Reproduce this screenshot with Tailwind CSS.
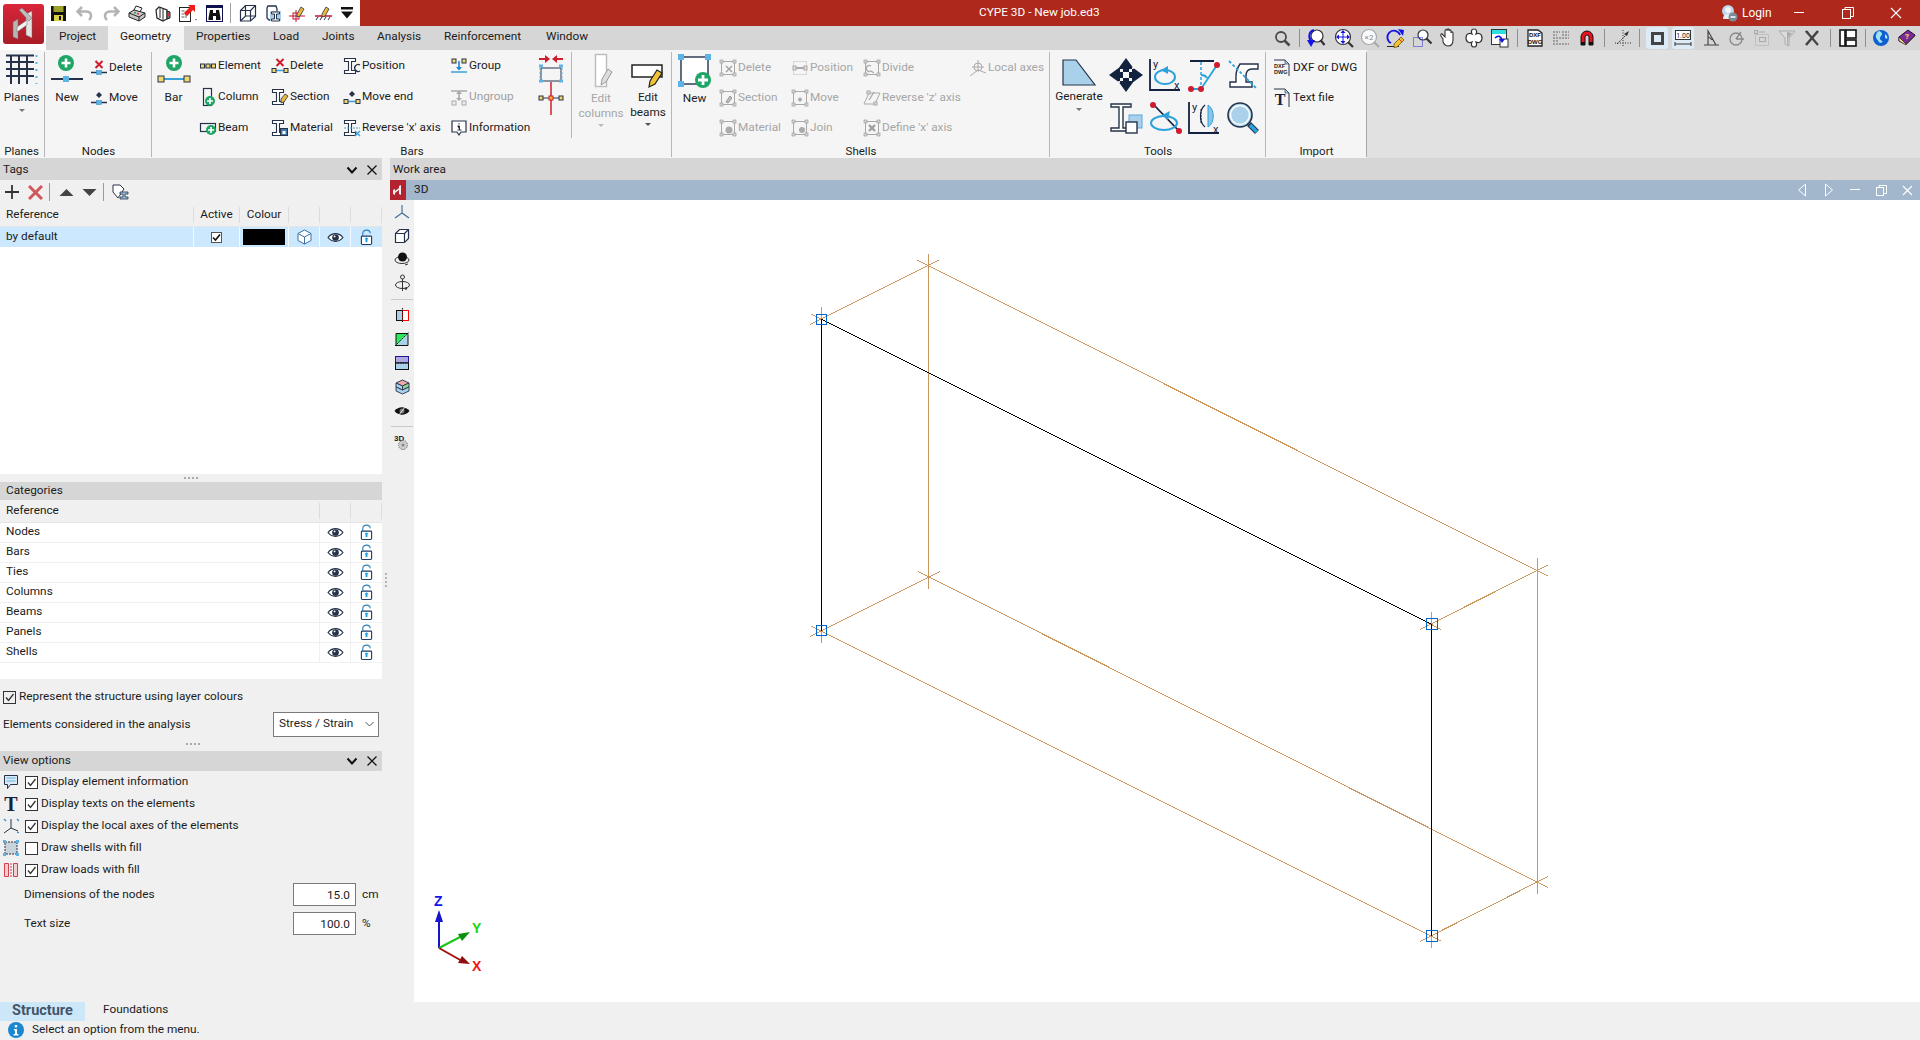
<!DOCTYPE html>
<html lang="en">
<head>
  <meta charset="UTF-8" />
  <title>CYPE 3D - New job.ed3</title>
  <script src="https://cdn.jsdelivr.net/npm/@tailwindcss/browser@4"></script>
</head>
<body class="h-[1040px] w-[1920px] overflow-hidden bg-[#f0f0f0] font-['Roboto',sans-serif] text-[11.8px] leading-none text-[#1c1c1c]">

<!-- shared icons -->
<svg class="absolute h-0 w-0">
  <symbol id="eye" viewBox="0 0 18 14"><path d="M1 7c4-5.500 12-5.500 16 0-4 5.500-12 5.500-16 0z" fill="#fff" stroke="#26324a" stroke-width="1.300"/><circle cx="9" cy="7" r="3.600" fill="#26324a"/><circle cx="8" cy="5.800" r="1" fill="#fff"/></symbol>
  <symbol id="lock" viewBox="0 0 14 18"><path d="M3 7V4.500a4 3.500 0 0 1 8 0" fill="none" stroke="#2d7fb8" stroke-width="1.200"/><rect x="1.500" y="7.500" width="11" height="9" rx="1" fill="#fff" stroke="#1f3d66" stroke-width="1.200"/><rect x="6" y="10" width="2" height="4" fill="#1d9be0"/><path d="M4.800 11L7 8.800 9.200 11z" fill="#1d9be0"/></symbol>
  <symbol id="chev" viewBox="0 0 12 10"><path d="M1.500 2.500L6 7.500l4.500-5" fill="none" stroke="#111" stroke-width="2"/></symbol>
  <symbol id="close" viewBox="0 0 12 12"><path d="M1.500 1.500l9 9M10.500 1.500l-9 9" fill="none" stroke="#111" stroke-width="1.300"/></symbol>
  <symbol id="check" viewBox="0 0 13 13"><path d="M3 6.500l2.500 3L10.500 3" fill="none" stroke="#333" stroke-width="1.300"/></symbol>
  <symbol id="ibeam" viewBox="0 0 18 18"><path d="M1.500 1.500h11v3H8.500v9h4v3h-11v-3h4v-9h-4z" fill="#fff" stroke="#26324a" stroke-width="1.100"/></symbol>
  <symbol id="barline" viewBox="0 0 18 18"><path d="M1 13.500h16" stroke="#3aa0d8" stroke-width="1.500"/><rect x="1" y="11.500" width="4" height="4" fill="#f3d76b" stroke="#26324a"/><rect x="13" y="11.500" width="4" height="4" fill="#f3d76b" stroke="#26324a"/></symbol>
  <symbol id="nodeline" viewBox="0 0 18 18"><path d="M1 13.500h16" stroke="#26324a" stroke-width="1.500"/><rect x="6.500" y="11.500" width="5" height="4" fill="#5cb4e6" stroke="#3a8fc4" stroke-width=".6"/></symbol>
  <symbol id="shell" viewBox="0 0 18 18"><rect x="2.500" y="2.500" width="13" height="13" fill="none" stroke="#a8a8a8"/><g fill="#d5d5d5" stroke="#a0a0a0" stroke-width=".7"><rect x="1" y="1" width="3" height="3"/><rect x="14" y="1" width="3" height="3"/><rect x="1" y="14" width="3" height="3"/><rect x="14" y="14" width="3" height="3"/></g></symbol>
</svg>

<!-- title bar -->
<header class="flex h-[26px] bg-[#ae281c]">
  <div class="flex w-[360px] items-center bg-white pl-[46px]">
    <span class="flex w-[25px] justify-center"><svg width="17" height="17" viewBox="0 0 17 17"><path d="M1 1h15v15H1z" fill="#111"/><rect x="3.500" y="1" width="10" height="6" fill="#9aa229"/><rect x="4" y="10" width="9" height="6" fill="#d9d24a"/><rect x="9" y="11" width="2" height="4" fill="#111"/></svg></span>
    <span class="flex w-[27px] justify-center"><svg width="17" height="16" viewBox="0 0 17 16"><path d="M6 2L1.500 6.500 6 11M2 6.500h8c3.500 0 5 2 5 4.500s-1 3-2 4" fill="none" stroke="#b4b4b4" stroke-width="2.600"/></svg></span>
    <span class="flex w-[26px] justify-center"><svg width="17" height="16" viewBox="0 0 17 16"><path d="M11 2l4.500 4.500L11 11M15 6.500H7C3.500 6.500 2 8.500 2 11s1 3 2 4" fill="none" stroke="#b4b4b4" stroke-width="2.600"/></svg></span>
    <span class="flex w-[26px] justify-center"><svg width="18" height="18" viewBox="0 0 18 18"><path d="M8 2l6 2-2 4H5z" fill="#fff" stroke="#222"/><path d="M1 9l5-3 11 3v4l-6 4-10-4z" fill="#c9c9c9" stroke="#222"/><path d="M1 9l10 4 6-4M11 13v4" fill="none" stroke="#222"/><rect x="6" y="8" width="2" height="1.500" fill="#2a9d4a"/><rect x="9" y="9" width="2" height="1.500" fill="#d33"/></svg></span>
    <span class="flex w-[25px] justify-center"><svg width="18" height="17" viewBox="0 0 18 17"><path d="M2 5l3-3 8 3v9l-4 2-6-3z" fill="#fff" stroke="#222" stroke-width="1.200"/><path d="M6 3v10M9 4v11" stroke="#222"/><path d="M13 6l3 1v6l-3 1z" fill="#777" stroke="#222"/><rect x="13.500" y="8" width="2" height="3" fill="#c33"/></svg></span>
    <span class="flex w-[26px] justify-center"><svg width="20" height="18" viewBox="0 0 20 18"><rect x="1.500" y="3.500" width="11" height="14" fill="#fff" stroke="#222"/><path d="M3.500 7h3M3.500 10h3M3.500 13h3M8 7v7" stroke="#999" stroke-width="1.500"/><path d="M6 9l6-6-2-2h7v7l-2-2-6 6z" fill="#ef1c1c"/><path d="M17 15l2 0-1 1.500z" fill="#555"/></svg></span>
    <span class="flex w-[27px] justify-center"><svg width="17" height="17" viewBox="0 0 17 17"><rect width="17" height="17" fill="#10104f"/><rect x="1" y="3" width="15" height="13" fill="#fff"/><path d="M4 5h3v3h3V5h3l1.500 8v2H10v-4H7v4H2.500v-2z" fill="#111"/></svg></span>
    <span class="ml-[2px] h-[20px] w-px bg-[#a0a0a0]"></span>
    <span class="ml-[4px] flex w-[25px] justify-center"><svg width="18" height="18" viewBox="0 0 18 18" fill="none" stroke="#26324a" stroke-width="1.200"><path d="M1.500 6.500l5-5h10v11l-5 4.500h-10z"/><path d="M1.500 6.500h10v10.500M11.500 6.500l5-5M1.500 17l5-5h10M6.500 1.500V12"/></svg></span>
    <span class="flex w-[25px] justify-center"><svg width="18" height="18" viewBox="0 0 18 18"><path d="M4 2h8l1 3v11H5l-2-2V4z" fill="#fff" stroke="#26324a" stroke-width="1.300"/><rect x="6" y="7" width="11" height="10" fill="#a9d0ea"/><path d="M7.500 8h8v2h-3v5h3v2h-8v-2h3v-5h-3z" fill="#fff" stroke="#26324a"/></svg></span>
    <span class="flex w-[26px] justify-center"><svg width="20" height="18" viewBox="0 0 20 18"><path d="M1 12h16M8 6v12" stroke="#c8102e" stroke-width="1"/><rect x="5" y="9" width="6" height="6" fill="none" stroke="#c8102e"/><path d="M9 10l4-7 3 2-4 7-3 1z" fill="#e9b93a" stroke="#26324a" stroke-width=".8"/></svg></span>
    <span class="flex w-[25px] justify-center"><svg width="20" height="18" viewBox="0 0 20 18"><path d="M1 12h17" stroke="#c8102e" stroke-width="1.500"/><path d="M2 16l2-3M6 16l2-3M10 16l2-3M14 16l2-3" stroke="#26324a"/><path d="M8 10l4-7 3 2-4 7-3 1z" fill="#e9b93a" stroke="#26324a" stroke-width=".8"/></svg></span>
    <span class="flex w-[22px] justify-center"><svg width="14" height="12" viewBox="0 0 14 12"><rect x="1" y="0" width="12" height="2.500" fill="#111"/><path d="M1 4.500h12L7 11.500z" fill="#111"/></svg></span>
  </div>
  <div class="ml-[619px] flex items-center text-white">CYPE 3D - New job.ed3</div>
  <div class="ml-auto flex items-center text-white">
    <svg width="18" height="18" viewBox="0 0 18 18"><circle cx="8" cy="7" r="6" fill="#b9d6ee"/><path d="M3 15c0-4 3-5 5-5s5 1 5 5z" fill="#e8eef3"/><circle cx="8" cy="6" r="3" fill="#f4f4f4"/><circle cx="13" cy="13" r="4.500" fill="#7c8a96"/><path d="M10.500 13h5" stroke="#fff" stroke-width="1.500"/></svg>
    <span class="ml-[4px] w-[34px] text-[12px]">Login</span>
    <span class="flex w-[48px] justify-center"><svg width="12" height="2"><rect width="10" height="1" fill="#fff"/></svg></span>
    <span class="flex w-[48px] justify-center"><svg width="12" height="12" viewBox="0 0 12 12" fill="none" stroke="#fff"><rect x=".5" y="2.500" width="8" height="9"/><path d="M3 2.500v-2h8.500v9H8.500"/></svg></span>
    <span class="flex w-[48px] justify-center"><svg width="12" height="12" viewBox="0 0 12 12"><path d="M1 1l10 10M11 1L1 11" stroke="#fff" stroke-width="1.200"/></svg></span>
  </div>
</header>

<!-- tabs and right toolbar -->
<nav class="flex h-[24px] bg-[#d6d6d6] text-[11.8px]">
  <div class="w-[46px] bg-white"></div>
  <div class="flex w-[62px] items-center pb-[2px] pl-[13px]">Project</div>
  <div class="flex w-[76px] items-center bg-[#f5f5f5] pb-[2px] pl-[12px]">Geometry</div>
  <div class="flex w-[77px] items-center pb-[2px] pl-[12px]">Properties</div>
  <div class="flex w-[49px] items-center pb-[2px] pl-[12px]">Load</div>
  <div class="flex w-[55px] items-center pb-[2px] pl-[12px]">Joints</div>
  <div class="flex w-[67px] items-center pb-[2px] pl-[12px]">Analysis</div>
  <div class="flex w-[102px] items-center pb-[2px] pl-[12px]">Reinforcement</div>
  <div class="flex w-[60px] items-center pb-[2px] pl-[12px]">Window</div>
  <div class="ml-[675px] flex w-[26px] items-center justify-center"><svg width="17" height="17" viewBox="0 0 17 17" fill="none" stroke="#4a4a4a"><circle cx="7" cy="7" r="5" stroke-width="1.800"/><path d="M10.500 10.500l5 5" stroke-width="2.600"/></svg></div>
  <span class="my-[3px] ml-[4px] w-px bg-[#8f8f8f]"></span>
  <div class="ml-[3px] flex w-[26px] items-center justify-center"><svg width="20" height="20" viewBox="0 0 20 20"><circle cx="11" cy="8" r="6" fill="#fff" stroke="#333" stroke-width="1.200"/><path d="M14.500 12l4 5" stroke="#333" stroke-width="2.200"/><path d="M8 2C3 3 2 9 5 13" fill="none" stroke="#1414e6" stroke-width="2"/><path d="M1 12h8l-4 7z" fill="#1414e6"/></svg></div>
  <div class="ml-[2px] flex w-[26px] items-center justify-center"><svg width="20" height="20" viewBox="0 0 20 20"><circle cx="9" cy="9" r="7.500" fill="#fff" stroke="#333" stroke-width="1.200"/><path d="M14 14l5 5" stroke="#333" stroke-width="2.200"/><path d="M9 2l2.500 3h-5zM9 16l2.500-3h-5zM2 9l3-2.500v5zM16 9l-3-2.500v5z" fill="#1414e6"/><path d="M9 5v8M5 9h8" stroke="#1414e6"/></svg></div>
  <div class="flex w-[26px] items-center justify-center"><svg width="20" height="20" viewBox="0 0 20 20"><circle cx="9" cy="9" r="7.500" fill="#fafafa" stroke="#a8a8a8" stroke-width="1.200"/><path d="M14 14l5 5" stroke="#a8a8a8" stroke-width="2"/><text x="9" y="12" text-anchor="middle" font-size="8" fill="#8a8a8a" font-family="Roboto">×2</text></svg></div>
  <div class="flex w-[26px] items-center justify-center"><svg width="20" height="20" viewBox="0 0 20 20"><path d="M14 7A6.500 6.500 0 1 0 5 15" fill="none" stroke="#1414e6" stroke-width="1.800"/><path d="M12 1l6 1-1 6z" fill="#1414e6"/><path d="M1 18.500h12" stroke="#222"/><path d="M8 16l7-7 3 3-7 7-3 .500z" fill="#f2c335" stroke="#5a3f00" stroke-width=".7"/><path d="M13 11l3 3" stroke="#d33"/></svg></div>
  <div class="flex w-[26px] items-center justify-center"><svg width="20" height="20" viewBox="0 0 20 20"><circle cx="11" cy="7" r="5" fill="#fff" stroke="#333" stroke-width="1.200"/><path d="M14.500 10.500l5 5" stroke="#333" stroke-width="2.200"/><rect x="1.500" y="9.500" width="9" height="9" fill="none" stroke="#2828d0" stroke-dasharray="1 1"/></svg></div>
  <div class="flex w-[26px] items-center justify-center"><svg width="18" height="20" viewBox="0 0 18 20"><path d="M4 11L2 8c-1-2 1-3 2-1l2 2V3c0-2 2-2 2 0V2c0-1.500 2-1.500 2 0v1c0-1.500 2-1.500 2 0v2c0-1.500 2-1.500 2 0v7c0 4-2 6-5 6s-4-2-5-4z" fill="#fff" stroke="#333" stroke-width="1.100"/></svg></div>
  <div class="flex w-[26px] items-center justify-center"><svg width="20" height="20" viewBox="0 0 20 20" fill="#fff" stroke="#333" stroke-width="1.200"><path d="M10 1c3 0 3 3 2 5 2-1 6-1 6 4s-4 5-6 4c1 2 1 5-2 5s-3-3-2-5c-2 1-6 1-6-4s4-5 6-4c-1-2-1-5 2-5z"/></svg></div>
  <div class="flex w-[26px] items-center justify-center"><svg width="20" height="20" viewBox="0 0 20 20"><rect x="1.500" y="1.500" width="15" height="15" fill="#fff" stroke="#333"/><rect x="2" y="2" width="14" height="4" fill="#2de0e0"/><rect x="10" y="11" width="8" height="8" fill="#fff" stroke="#333"/><path d="M5 10c3-3 6-2 7 2" fill="none" stroke="#1414e6" stroke-width="1.600"/><path d="M9 11h6l-3 4z" fill="#1414e6"/></svg></div>
  <span class="my-[3px] ml-[4px] w-px bg-[#8f8f8f]"></span>
  <div class="ml-[4px] flex w-[26px] items-center justify-center"><svg width="18" height="18" viewBox="0 0 18 18"><path d="M2 1h10l4 3v13H2z" fill="#fff" stroke="#222" stroke-width="1.300"/><text x="9" y="8" text-anchor="middle" font-size="6" font-weight="700" fill="#111" font-family="Liberation Sans">DXF</text><text x="9" y="14.500" text-anchor="middle" font-size="6" font-weight="700" fill="#111" font-family="Liberation Sans">DWG</text></svg></div>
  <div class="flex w-[26px] items-center justify-center"><svg width="18" height="18" viewBox="0 0 18 18"><path d="M1 3h7M1 6h4M10 3h7M10 6h7M1 9h16M1 12h6M1 15h16" stroke="#8a8a8a" stroke-width="1.600" stroke-dasharray="2 1"/></svg></div>
  <div class="flex w-[26px] items-center justify-center"><svg width="18" height="18" viewBox="0 0 18 18"><path d="M3 16V8a6 6 0 0 1 12 0v8h-4V8a2 2 0 0 0-4 0v8z" fill="#e5141c" stroke="#111"/><path d="M3 13h4v3H3zM11 13h4v3h-4z" fill="#111"/></svg></div>
  <span class="my-[3px] ml-[4px] w-px bg-[#8f8f8f]"></span>
  <div class="ml-[5px] flex w-[26px] items-center justify-center"><svg width="18" height="18" viewBox="0 0 18 18"><path d="M3 15L14 4" stroke="#333" stroke-dasharray="1.500 1"/><path d="M9 1v17M1 14h16" stroke="#333" stroke-dasharray="1 1.500"/><path d="M10 5l5-3-2 5z" fill="#333"/></svg></div>
  <span class="my-[3px] ml-[3px] w-px bg-[#8f8f8f]"></span>
  <div class="ml-[6px] mt-[1px] flex h-[22px] w-[22px] items-center justify-center rounded-[3px] bg-[#dcebf5]"><span class="h-[13px] w-[13px] border-[3px] border-[#444]"></span></div>
  <div class="ml-[4px] mt-[1px] flex h-[22px] w-[22px] items-center justify-center rounded-[3px] bg-[#dcebf5]"><svg width="18" height="18" viewBox="0 0 18 18"><rect x="1.500" y="1.500" width="15" height="9" fill="#fff" stroke="#333"/><text x="9" y="9" text-anchor="middle" font-size="7" fill="#222" font-family="Roboto">1.00</text><path d="M1 15h16M1 13v4M17 13v4" stroke="#333"/></svg></div>
  <div class="ml-[5px] flex w-[25px] items-center justify-center"><svg width="18" height="18" viewBox="0 0 18 18" fill="none" stroke="#444" stroke-width="1.200"><path d="M1 16h15M5 16V2l8 14M5 8a7 7 0 0 1 4 3"/></svg></div>
  <div class="flex w-[25px] items-center justify-center"><svg width="18" height="18" viewBox="0 0 18 18" fill="none" stroke="#888" stroke-width="1.300"><circle cx="8" cy="10" r="6"/><path d="M8 10l5-7M8 10h8"/></svg></div>
  <div class="flex w-[25px] items-center justify-center"><svg width="18" height="18" viewBox="0 0 18 18" fill="none" stroke="#aaa"><rect x="2.500" y="5.500" width="13" height="11" stroke-dasharray="1 1"/><rect x="1.500" y="1.500" width="3" height="3"/><path d="M6 3h6"/><rect x="6.500" y="8.500" width="6" height="4"/></svg></div>
  <div class="flex w-[25px] items-center justify-center"><svg width="18" height="18" viewBox="0 0 18 18"><path d="M1 2h16l-6 7v8l-4-2V9z" fill="#ddd" stroke="#aaa"/><path d="M9 3l5 1-4 5v7l-1-1z" fill="#aaa"/></svg></div>
  <div class="flex w-[25px] items-center justify-center"><svg width="18" height="18" viewBox="0 0 18 18"><path d="M3 2l12 14" stroke="#444" stroke-width="2.200"/><path d="M15 2L3 16" stroke="#444" stroke-width="2.600"/><path d="M2 2l3 0 1 3-2 0z" fill="#444"/></svg></div>
  <span class="my-[3px] ml-[6px] w-px bg-[#8f8f8f]"></span>
  <div class="ml-[5px] flex w-[24px] items-center justify-center"><svg width="18" height="18" viewBox="0 0 18 18" fill="#fff" stroke="#111" stroke-width="1.600"><rect x="1" y="1" width="5" height="16"/><rect x="7" y="1" width="10" height="8"/><rect x="7" y="11" width="10" height="6"/></svg></div>
  <span class="my-[3px] ml-[5px] w-px bg-[#8f8f8f]"></span>
  <div class="ml-[3px] flex w-[24px] items-center justify-center"><svg width="18" height="18" viewBox="0 0 18 18"><circle cx="9" cy="9" r="8" fill="#0f5fd0"/><path d="M7 2c3 1 4 3 2 5s-1 4 1 5-2 3-3 1-4-4-3-7 2-4 3-4zM13 5c2 1 3 3 2 5l-2-1z" fill="#9fe4f2"/></svg></div>
  <div class="ml-[2px] flex w-[24px] items-center justify-center"><svg width="18" height="18" viewBox="0 0 18 18"><path d="M1 8l9-7 7 5-9 9-7-3z" fill="#7a2a98" stroke="#2a1338"/><path d="M1 8v4l7 4 9-9V6l-9 9z" fill="#f2dc78" stroke="#2a1338" stroke-width=".7"/><text x="9" y="10" text-anchor="middle" font-size="8" font-weight="700" fill="#f7e24b" font-family="Roboto">?</text></svg></div>
</nav>

<!-- logo sits over the title bar and the tabs -->
<div class="absolute left-[3px] top-[4px] h-[40px] w-[41px] rounded-[3px] bg-gradient-to-b from-[#d9263a] to-[#a91d26]">
  <svg width="41" height="40" viewBox="0 0 41 40"><path d="M10 18l5-3v20l-5-2z" fill="#b5b5b5" stroke="#6b6b6b" stroke-width=".5"/><path d="M23 10l6-3v27l-6-3z" fill="#e4e4e4" stroke="#6b6b6b" stroke-width=".5"/><path d="M14 23l10-7v5l-10 7z" fill="#f2f2f2" stroke="#6b6b6b" stroke-width=".5"/><path d="M16 6l3-2 10 10-3 3z" fill="#bdbdbd" stroke="#6b6b6b" stroke-width=".5"/></svg>
</div>

<!-- ribbon -->
<section class="flex h-[108px] bg-[#e1e1e1]">
  <!-- Planes -->
  <div class="relative flex w-[45px] flex-col bg-[#f5f5f5]">
    <div class="flex h-[95px] flex-col items-center pr-[2px]">
      <svg class="mt-[4px]" width="33" height="31" viewBox="0 0 33 31"><path d="M1 8h28M1 15h28M1 22h28M6 1v29M14 1v29M22 1v29" stroke="#26324a" stroke-width="2"/><path d="M1 1.500h28" stroke="#26324a" stroke-width="2"/><path d="M31.500 1v29" stroke="#5cb4e6" stroke-width="2" stroke-dasharray="2 5"/></svg>
      <span class="mt-[7px]">Planes</span>
      <span class="mt-[5px] h-0 w-0 border-x-[3px] border-t-[3px] border-x-transparent border-t-[#777]"></span>
    </div>
    <div class="flex h-[13px] items-center justify-center pr-[2px] text-[11.500px]">Planes</div>
    <span class="absolute bottom-[1px] right-0 top-[2px] w-px bg-[#b8b8b8]"></span>
  </div>
  <!-- Nodes -->
  <div class="relative flex w-[107px] flex-col bg-[#f5f5f5]">
    <div class="flex h-[95px]">
      <div class="flex w-[44px] flex-col items-center">
        <svg class="mt-[3px]" width="34" height="32" viewBox="0 0 34 32"><circle cx="16" cy="10" r="8" fill="#1fa566"/><path d="M16 5.500v9M11.500 10h9" stroke="#fff" stroke-width="2.600"/><path d="M1 26h32" stroke="#26324a" stroke-width="2"/><rect x="13" y="23" width="6" height="6" fill="#5cb4e6"/></svg>
        <span class="mt-[7px]">New</span>
      </div>
      <div class="flex flex-col pt-[2px]">
        <div class="flex h-[31px] items-center"><span class="flex w-[20px] justify-center"><svg width="18" height="18"><use href="#nodeline"/><path d="M5.500 2l7 7M12.500 2l-7 7" stroke="#d01c2c" stroke-width="2"/></svg></span>Delete</div>
        <div class="flex h-[30px] items-center"><span class="flex w-[20px] justify-center"><svg width="18" height="18"><use href="#nodeline"/><path d="M9 3l3 3-3 3-3-3z" fill="#26324a"/></svg></span>Move</div>
      </div>
    </div>
    <div class="flex h-[13px] items-center justify-center text-[11.500px]">Nodes</div>
    <span class="absolute bottom-[1px] right-0 top-[2px] w-px bg-[#b8b8b8]"></span>
  </div>
  <!-- Bars -->
  <div class="relative flex w-[520px] flex-col bg-[#f5f5f5]">
    <div class="flex h-[95px]">
      <div class="flex w-[45px] flex-col items-center pr-[2px]">
        <svg class="mt-[3px]" width="34" height="32" viewBox="0 0 34 32"><circle cx="17" cy="10" r="8" fill="#1fa566"/><path d="M17 5.500v9M12.500 10h9" stroke="#fff" stroke-width="2.600"/><path d="M3 26h28" stroke="#3aa0d8" stroke-width="2"/><rect x="1" y="23" width="6" height="6" fill="#f3d76b" stroke="#26324a"/><rect x="27" y="23" width="6" height="6" fill="#f3d76b" stroke="#26324a"/></svg>
        <span class="mt-[7px]">Bar</span>
      </div>
      <div class="flex w-[72px] flex-col">
        <div class="flex h-[31px] items-center"><span class="flex w-[21px] justify-center"><svg width="18" height="10" viewBox="0 0 18 10"><path d="M1 5h16" stroke="#26324a"/><g fill="#f3d76b" stroke="#26324a"><rect x="1.500" y="3" width="4" height="4"/><rect x="7" y="3" width="4" height="4"/><rect x="12.500" y="3" width="4" height="4"/></g></svg></span>Element</div>
        <div class="flex h-[31px] items-center"><span class="flex w-[21px] justify-center"><svg width="18" height="20" viewBox="0 0 18 20"><rect x="4.500" y="1.500" width="8" height="17" fill="none" stroke="#26324a" stroke-width="1.200"/><circle cx="11" cy="14" r="5" fill="#1fa566"/><path d="M11 11v6M8 14h6" stroke="#fff" stroke-width="1.600"/></svg></span>Column</div>
        <div class="flex h-[31px] items-center"><span class="flex w-[21px] justify-center"><svg width="18" height="16" viewBox="0 0 18 16"><rect x="1.500" y="3.500" width="15" height="8" fill="none" stroke="#26324a" stroke-width="1.200"/><circle cx="12" cy="10" r="5" fill="#1fa566"/><path d="M12 7v6M9 10h6" stroke="#fff" stroke-width="1.600"/></svg></span>Beam</div>
      </div>
      <div class="flex w-[72px] flex-col">
        <div class="flex h-[31px] items-center"><span class="flex w-[21px] justify-center"><svg width="18" height="18"><use href="#barline"/><path d="M5.500 2l7 7M12.500 2l-7 7" stroke="#d01c2c" stroke-width="2"/></svg></span>Delete</div>
        <div class="flex h-[31px] items-center"><span class="flex w-[21px] justify-center"><svg width="18" height="18"><use href="#ibeam"/><path d="M10 11l4-5 3 2-4 6-3 1z" fill="#e9b93a" stroke="#26324a" stroke-width=".8"/></svg></span>Section</div>
        <div class="flex h-[31px] items-center"><span class="flex w-[21px] justify-center"><svg width="18" height="18"><use href="#ibeam"/><rect x="9.500" y="9.500" width="7" height="7" fill="#3f78a8" stroke="#26324a"/><rect x="11.500" y="12" width="3" height="3" fill="#fff"/></svg></span>Material</div>
      </div>
      <div class="flex w-[107px] flex-col">
        <div class="flex h-[31px] items-center"><span class="flex w-[21px] justify-center"><svg width="18" height="18"><use href="#ibeam"/><path d="M17 8a3.500 3.500 0 1 0 0 6" fill="none" stroke="#26324a" stroke-width="1.300"/></svg></span>Position</div>
        <div class="flex h-[31px] items-center"><span class="flex w-[21px] justify-center"><svg width="18" height="18"><use href="#barline"/><path d="M9 3l3 3-3 3-3-3z" fill="#26324a"/></svg></span>Move end</div>
        <div class="flex h-[31px] items-center"><span class="flex w-[21px] justify-center"><svg width="18" height="18"><use href="#ibeam"/><path d="M1 9h16" stroke="#3aa0d8" stroke-dasharray="2 1"/><path d="M12 12l5 5M17 12l-5 5" stroke="#3aa0d8" stroke-width="1.300"/></svg></span>Reverse 'x' axis</div>
      </div>
      <div class="flex w-[88px] flex-col">
        <div class="flex h-[31px] items-center"><span class="flex w-[21px] justify-center"><svg width="18" height="18" viewBox="0 0 18 18"><path d="M1 15h16" stroke="#3aa0d8" stroke-width="1.500"/><g fill="#f3d76b" stroke="#26324a"><rect x="2" y="2" width="4" height="4"/><rect x="12" y="2" width="4" height="4"/></g><path d="M9 4v7" stroke="#1b86d0" stroke-width="1.600"/><path d="M6 10h6l-3 3.500z" fill="#1b86d0"/></svg></span>Group</div>
        <div class="flex h-[31px] items-center text-[#a0a0a0]"><span class="flex w-[21px] justify-center"><svg width="18" height="18" viewBox="0 0 18 18"><path d="M1 3h16" stroke="#aaa" stroke-width="1.500"/><path d="M9 3v8" stroke="#aaa" stroke-width="1.600"/><path d="M6 6l3-3.500L12 6zM6 10h6l-3 3z" fill="#aaa"/><g fill="#eee" stroke="#aaa"><rect x="2" y="13" width="4" height="4"/><rect x="12" y="13" width="4" height="4"/></g></svg></span>Ungroup</div>
        <div class="flex h-[31px] items-center"><span class="flex w-[21px] justify-center"><svg width="18" height="18" viewBox="0 0 18 18"><path d="M2 2h14v11h-5l-2 3-2-3H2z" fill="#fff" stroke="#26324a" stroke-width="1.200"/><path d="M9 4v1.500M7.500 7H9.500v4M7.500 11h4" stroke="#26324a"/></svg></span>Information</div>
      </div>
      <div class="flex w-[30px] flex-col items-center">
        <svg class="mt-[4px]" width="26" height="30" viewBox="0 0 26 30"><path d="M1 5h8M25 5h-8" stroke="#d01c2c" stroke-width="2"/><path d="M12 5L7 1v8zM14 5l5-4v8z" fill="#d01c2c"/><rect x="3" y="14" width="20" height="13" fill="none" stroke="#26324a"/><path d="M1 12h4M21 12h4M1 27h4M21 27h4" stroke="#5cb4e6" stroke-width="3"/><path d="M2 14v12M24 14v12" stroke="#5cb4e6" stroke-dasharray="2 2"/></svg>
        <svg class="mt-[-3px]" width="26" height="34" viewBox="0 0 26 34"><path d="M13 1v33" stroke="#d01c2c" stroke-width="1.500"/><path d="M1 17h24" stroke="#26324a"/><rect x="1" y="15" width="4" height="4" fill="#f3d76b" stroke="#26324a"/><rect x="21" y="15" width="4" height="4" fill="#f3d76b" stroke="#26324a"/><rect x="11" y="15" width="4" height="4" fill="#f3b03b" stroke="#d01c2c"/></svg>
      </div>
      <span class="mb-[-12px] ml-[5px] mt-[2px] h-[86px] w-px bg-[#b8b8b8]"></span>
      <div class="flex w-[58px] flex-col items-center text-[#a6a6a6]">
        <svg class="mt-[3px]" width="26" height="37" viewBox="0 0 26 37"><rect x="7.500" y="1.500" width="11" height="32" fill="#fff" stroke="#bcbcbc" stroke-width="1.400"/><path d="M14 26l6-10 4 3-6 10-5 3z" fill="#ddd" stroke="#999"/></svg>
        <span class="mt-[1px] leading-[15px]">Edit</span>
        <span class="leading-[15px]">columns</span>
        <span class="mt-[3px] h-0 w-0 border-x-[3px] border-t-[3px] border-x-transparent border-t-[#bbb]"></span>
      </div>
      <div class="flex w-[36px] flex-col items-center">
        <svg class="mt-[9px] shrink-0" width="34" height="34" viewBox="0 0 34 34"><rect x="1" y="6" width="30" height="12" fill="#fff" stroke="#222" stroke-width="1.500"/><path d="M19 22l7-11 5 3-7 11-6 3z" fill="#f2c335" stroke="#222" stroke-width="1.200"/></svg>
        <span class="mt-[-3px] leading-[15px]">Edit</span>
        <span class="leading-[15px]">beams</span>
        <span class="mt-[3px] h-0 w-0 border-x-[3px] border-t-[3px] border-x-transparent border-t-[#555]"></span>
      </div>
    </div>
    <div class="flex h-[13px] items-center justify-center text-[11.500px]">Bars</div>
    <span class="absolute bottom-[1px] right-0 top-[2px] w-px bg-[#b8b8b8]"></span>
  </div>
  <!-- Shells -->
  <div class="relative flex w-[378px] flex-col bg-[#f5f5f5] text-[#a6a6a6]">
    <div class="flex h-[95px] pt-[2px]">
      <div class="flex w-[45px] flex-col items-center text-[#1c1c1c]">
        <svg class="mt-[2px]" width="34" height="34" viewBox="0 0 34 34"><rect x="3" y="3" width="27" height="27" fill="#fff" stroke="#26324a" stroke-width="1.400"/><g fill="#5cb4e6"><rect x="0" y="0" width="6" height="6"/><rect x="27" y="0" width="6" height="6"/><rect x="0" y="27" width="6" height="6"/></g><circle cx="25" cy="26" r="8" fill="#1fa566"/><path d="M25 21v10M20 26h10" stroke="#fff" stroke-width="2.800"/></svg>
        <span class="mt-[5px]">New</span>
      </div>
      <div class="flex w-[72px] flex-col">
        <div class="flex h-[31px] items-center"><span class="flex w-[21px] justify-center"><svg width="18" height="18"><use href="#shell"/><path d="M7 7l6 6M13 7l-6 6" stroke="#a0a0a0" stroke-width="1.400"/></svg></span>Delete</div>
        <div class="flex h-[30px] items-center"><span class="flex w-[21px] justify-center"><svg width="18" height="18"><use href="#shell"/><path d="M7 13l4-6 2 2-4 5z" fill="#bbb" stroke="#999"/></svg></span>Section</div>
        <div class="flex h-[29px] items-center"><span class="flex w-[21px] justify-center"><svg width="18" height="18"><use href="#shell"/><circle cx="10" cy="11" r="3.500" fill="#aaa"/></svg></span>Material</div>
      </div>
      <div class="flex w-[72px] flex-col">
        <div class="flex h-[31px] items-center"><span class="flex w-[21px] justify-center"><svg width="18" height="18" viewBox="0 0 18 18"><rect x="2.500" y="2.500" width="13" height="13" fill="none" stroke="#bbb" stroke-dasharray="1 1"/><path d="M4 9h10" stroke="#aaa" stroke-width="2"/><rect x="2" y="7" width="3" height="4" fill="#ddd" stroke="#aaa"/><rect x="13" y="7" width="3" height="4" fill="#ddd" stroke="#aaa"/></svg></span>Position</div>
        <div class="flex h-[30px] items-center"><span class="flex w-[21px] justify-center"><svg width="18" height="18"><use href="#shell"/><path d="M9 8l2.500 2.500L9 13l-2.500-2.500z" fill="#aaa"/></svg></span>Move</div>
        <div class="flex h-[29px] items-center"><span class="flex w-[21px] justify-center"><svg width="18" height="18"><use href="#shell"/><circle cx="11" cy="11" r="3" fill="#aaa"/></svg></span>Join</div>
      </div>
      <div class="flex w-[106px] flex-col">
        <div class="flex h-[31px] items-center"><span class="flex w-[21px] justify-center"><svg width="18" height="18"><use href="#shell"/><path d="M8 7a3 3 0 1 0 0 5l3 2" fill="none" stroke="#aaa" stroke-width="1.300"/></svg></span>Divide</div>
        <div class="flex h-[30px] items-center"><span class="flex w-[21px] justify-center"><svg width="18" height="18" viewBox="0 0 18 18" fill="none" stroke="#aaa"><path d="M6 4h11l-5 11H1z"/><path d="M6 11l5-8" stroke-width="1.400"/><rect x="4" y="2" width="3" height="3" fill="#ddd"/><rect x="11" y="13" width="3" height="3" fill="#ddd"/></svg></span>Reverse 'z' axis</div>
        <div class="flex h-[29px] items-center"><span class="flex w-[21px] justify-center"><svg width="18" height="18"><use href="#shell"/><path d="M6 6l6 6M12 6l-6 6" stroke="#999" stroke-width="2"/></svg></span>Define 'x' axis</div>
      </div>
      <div class="flex flex-col">
        <div class="flex h-[31px] items-center"><span class="flex w-[21px] justify-center"><svg width="18" height="18" viewBox="0 0 18 18" fill="none" stroke="#aaa"><circle cx="9" cy="8" r="4"/><path d="M9 1v11M1 17l8-6 8 3M3 8h12"/></svg></span>Local axes</div>
      </div>
    </div>
    <div class="flex h-[13px] items-center justify-center text-[11.500px] text-[#1c1c1c]">Shells</div>
    <span class="absolute bottom-[1px] right-0 top-[2px] w-px bg-[#b8b8b8]"></span>
  </div>
  <!-- Tools -->
  <div class="relative flex w-[216px] flex-col bg-[#f5f5f5]">
    <div class="flex h-[95px]">
      <div class="flex w-[58px] flex-col items-center">
        <svg class="mt-[9px]" width="34" height="27" viewBox="0 0 34 27"><path d="M1 1h13l19 25H1z" fill="#a9d2ea" stroke="#26324a" stroke-width="1.200"/></svg>
        <span class="mt-[5px]">Generate</span>
        <span class="mt-[5px] h-0 w-0 border-x-[3px] border-t-[3px] border-x-transparent border-t-[#777]"></span>
      </div>
      <div class="ml-[-2px] grid grid-cols-[39px_39px_39px_39px] grid-rows-[43px_43px] items-center justify-items-center pt-[3px]">
        <svg width="34" height="34" viewBox="0 0 34 34" fill="#13233f"><path d="M17 0l8 11h-5v3h-6v-3H9zM17 34l8-11h-5v-3h-6v3H9zM0 17l11-8v5h3v6h-3v5zM34 17l-11-8v5h-3v6h3v5z"/></svg>
        <svg width="34" height="34" viewBox="0 0 34 34"><path d="M2 1v31h30" fill="none" stroke="#13233f" stroke-width="1.800"/><text x="5" y="10" font-size="11" fill="#13233f" font-family="Roboto">y</text><text x="26" y="31" font-size="11" fill="#13233f" font-family="Roboto">x</text><ellipse cx="17" cy="19" rx="10" ry="7" fill="none" stroke="#2ba2dc" stroke-width="2"/><path d="M20 8L13 12l7 4z" fill="#2ba2dc"/></svg>
        <svg width="34" height="34" viewBox="0 0 34 34"><path d="M3 3h24" stroke="#13233f" stroke-width="2"/><path d="M14 4v26" stroke="#2ba2dc" stroke-width="1.500" stroke-dasharray="3 2"/><path d="M14 31L30 7M4 31h10M14 17c3 0 5 1 6 3" fill="none" stroke="#2ba2dc" stroke-width="1.800"/><g fill="#d01c2c"><circle cx="4" cy="31" r="3"/><circle cx="14" cy="31" r="3"/><circle cx="30" cy="7" r="3"/></g></svg>
        <svg width="34" height="34" viewBox="0 0 34 34"><path d="M14 6h18v5h-6c-4 0-6 3-6 7v6h6v5H4v-5h6v-6c0-6 4-12 4-12z" fill="#fff" stroke="#26324a" stroke-width="1.400"/><path d="M3 3l28 28" stroke="#2ba2dc" stroke-width="1.800" stroke-dasharray="3 2"/></svg>
        <svg width="34" height="34" viewBox="0 0 34 34"><path d="M2 3h20v3h-8v21h8v3H2v-3h8V6H2z" fill="#fff" stroke="#26324a" stroke-width="1.400"/><rect x="20" y="14" width="13" height="13" fill="#a9d2ea" stroke="#5ba8d8"/><rect x="17" y="21" width="11" height="11" fill="#fff" stroke="#26324a" stroke-width="1.400"/></svg>
        <svg width="34" height="34" viewBox="0 0 34 34"><path d="M5 3l26 27" stroke="#13233f" stroke-width="1.800"/><ellipse cx="16" cy="22" rx="13" ry="7" fill="none" stroke="#2ba2dc" stroke-width="2"/><path d="M22 10l-8 4 6 5z" fill="#2ba2dc"/><circle cx="5" cy="4" r="3" fill="#d01c2c"/><circle cx="31" cy="30" r="3" fill="#d01c2c"/></svg>
        <svg width="34" height="34" viewBox="0 0 34 34"><path d="M2 1v31h30" fill="none" stroke="#13233f" stroke-width="1.800"/><text x="5" y="10" font-size="11" fill="#13233f" font-family="Roboto">y</text><text x="26" y="32" font-size="11" fill="#13233f" font-family="Roboto">x</text><path d="M18 4c-6 5-6 17 0 22" fill="none" stroke="#13233f" stroke-width="1.200"/><path d="M14 8v14" stroke="#13233f" stroke-dasharray="2 1"/><path d="M21 4c7 4 7 18 0 22z" fill="#8cc4e8" stroke="#2ba2dc"/></svg>
        <svg width="34" height="34" viewBox="0 0 34 34"><circle cx="14" cy="14" r="12" fill="#a9d2ea" stroke="#26324a" stroke-width="1.600"/><circle cx="14" cy="14" r="9.500" fill="none" stroke="#fff" stroke-width="1.400"/><path d="M23 23l8 8" stroke="#26324a" stroke-width="5.500"/><path d="M24 24l7 7" stroke="#2ba2dc" stroke-width="3.500"/></svg>
      </div>
    </div>
    <div class="flex h-[13px] items-center justify-center text-[11.500px]">Tools</div>
    <span class="absolute bottom-[1px] right-0 top-[2px] w-px bg-[#b8b8b8]"></span>
  </div>
  <!-- Import -->
  <div class="relative flex w-[101px] flex-col bg-[#f5f5f5]">
    <div class="flex h-[95px] flex-col pl-[7px] pt-[2px]">
      <div class="flex h-[31px] items-center"><svg class="mr-[3px]" width="17" height="18" viewBox="0 0 17 18"><path d="M1 1h11l4 4v12" fill="none" stroke="#26324a"/><path d="M12 1v4h4z" fill="#a9d2ea" stroke="#26324a" stroke-width=".6"/><text x="1" y="9" font-size="5.500" font-weight="700" fill="#222" font-family="Liberation Sans">DXF</text><text x="1" y="15" font-size="5.500" font-weight="700" fill="#222" font-family="Liberation Sans">DWG</text></svg>DXF or DWG</div>
      <div class="flex h-[30px] items-center"><svg class="mr-[3px]" width="17" height="20" viewBox="0 0 17 20"><path d="M1 1h11l4 4v14" fill="none" stroke="#26324a"/><path d="M12 1v4h4z" fill="#a9d2ea" stroke="#26324a" stroke-width=".6"/><text x="7" y="17" text-anchor="middle" font-size="16" font-weight="700" fill="#13233f" font-family="Liberation Serif">T</text></svg>Text file</div>
    </div>
    <div class="flex h-[13px] items-center justify-center text-[11.500px]">Import</div>
    <span class="absolute bottom-[1px] right-0 top-[2px] w-px bg-[#a8a8a8]"></span>
  </div>
</section>

<!-- main area -->
<main class="flex h-[844px]">
  <!-- left panels -->
  <aside class="flex w-[382px] flex-col">
    <!-- Tags -->
    <div class="flex h-[316px] flex-col bg-white">
      <div class="flex h-[22px] shrink-0 items-center bg-[#d6d6d6] pl-[3px] pt-[2px]">Tags
        <svg class="ml-auto" width="12" height="10"><use href="#chev"/></svg>
        <svg class="ml-[8px] mr-[4px]" width="12" height="12"><use href="#close"/></svg>
      </div>
      <div class="flex h-[24px] shrink-0 items-center bg-[#f0f0f0] pl-[5px]">
        <svg width="14" height="14" viewBox="0 0 14 14"><path d="M7 0v14M0 7h14" stroke="#333" stroke-width="1.800"/></svg>
        <svg class="ml-[9px]" width="15" height="15" viewBox="0 0 15 15"><path d="M1 1l13 13M14 1L1 14" stroke="#d0585a" stroke-width="3"/></svg>
        <span class="ml-[6px] h-[18px] w-px bg-[#9a9a9a]"></span>
        <svg class="ml-[9px]" width="15" height="9" viewBox="0 0 15 9"><path d="M7.500 1L14.500 8H.5z" fill="#444"/></svg>
        <svg class="ml-[8px]" width="15" height="9" viewBox="0 0 15 9"><path d="M.5 1h14L7.500 8z" fill="#444"/></svg>
        <span class="ml-[6px] h-[18px] w-px bg-[#9a9a9a]"></span>
        <svg class="ml-[8px]" width="17" height="17" viewBox="0 0 17 17"><path d="M1 1h7l4 4-6 9-5-6z" fill="#fff" stroke="#26324a"/><path d="M8 8h8v2h-3v3h3v2H8v-2h3v-3H8z" fill="#9ec6e2" stroke="#26324a" stroke-width=".8"/></svg>
      </div>
      <div class="grid h-[23px] shrink-0 grid-cols-[194px_46px_49px_31px_31px_31px] border-b border-[#e5e5e5] bg-[#f0f0f0]">
        <span class="my-[3px] flex items-center border-r border-[#dcdcdc] pl-[6px]">Reference</span>
        <span class="my-[3px] flex items-center justify-center border-r border-[#dcdcdc]">Active</span>
        <span class="my-[3px] flex items-center justify-center border-r border-[#dcdcdc]">Colour</span>
        <span class="my-[3px] border-r border-[#dcdcdc]"></span>
        <span class="my-[3px] border-r border-[#dcdcdc]"></span>
        <span class="my-[3px] border-r border-[#dcdcdc]"></span>
      </div>
      <div class="grid h-[20px] shrink-0 grid-cols-[194px_46px_49px_31px_31px_31px] bg-[#cce8ff]">
        <span class="flex items-center border-r border-[#f2f8fd] pl-[6px]">by default</span>
        <span class="flex items-center justify-center border-r border-[#f2f8fd]"><span class="h-[11px] w-[11px] border border-[#555] bg-white"><svg class="m-[-1px]" width="11" height="11"><path d="M2 5.500L4.500 8 9 2.500" fill="none" stroke="#111" stroke-width="1.600"/></svg></span></span>
        <span class="flex items-center justify-center border-r border-[#f2f8fd]"><span class="h-[16px] w-[42px] bg-black"></span></span>
        <span class="flex items-center justify-center border-r border-[#f2f8fd]"><svg width="15" height="16" viewBox="0 0 15 16" fill="#fff" stroke="#3a6ea5"><path d="M7.500 1L14 4.500v7L7.500 15 1 11.500v-7z"/><path d="M1 4.500L7.500 8 14 4.500M7.500 8v7"/></svg></span>
        <span class="flex items-center justify-center border-r border-[#f2f8fd]"><svg width="17" height="13"><use href="#eye"/></svg></span>
        <span class="flex items-center justify-center"><svg width="13" height="17"><use href="#lock"/></svg></span>
      </div>
    </div>
    <div class="flex h-[8px] items-center justify-center gap-[2px]"><i class="h-[2px] w-[2px] bg-[#aaa]"></i><i class="h-[2px] w-[2px] bg-[#aaa]"></i><i class="h-[2px] w-[2px] bg-[#aaa]"></i><i class="h-[2px] w-[2px] bg-[#aaa]"></i></div>
    <!-- Categories -->
    <div class="flex h-[197px] flex-col bg-white">
      <div class="flex h-[18px] shrink-0 items-center bg-[#d6d6d6] pl-[6px]">Categories</div>
      <div class="grid h-[23px] shrink-0 grid-cols-[320px_31px_31px] border-b border-[#e5e5e5] bg-[#f0f0f0]">
        <span class="my-[3px] flex items-center border-r border-[#dcdcdc] pl-[6px]">Reference</span>
        <span class="my-[3px] border-r border-[#dcdcdc]"></span>
        <span class="my-[3px] border-r border-[#dcdcdc]"></span>
      </div>
      <div class="grid h-[20px] shrink-0 grid-cols-[320px_31px_31px] border-b border-[#f0f0f0]">
        <span class="flex items-center border-r border-[#f0f0f0] pb-[1px] pl-[6px]">Nodes</span>
        <span class="flex items-center justify-center border-r border-[#f0f0f0]"><svg width="17" height="13"><use href="#eye"/></svg></span>
        <span class="flex items-center justify-center"><svg width="13" height="17"><use href="#lock"/></svg></span>
      </div>
      <div class="grid h-[20px] shrink-0 grid-cols-[320px_31px_31px] border-b border-[#f0f0f0]">
        <span class="flex items-center border-r border-[#f0f0f0] pb-[1px] pl-[6px]">Bars</span>
        <span class="flex items-center justify-center border-r border-[#f0f0f0]"><svg width="17" height="13"><use href="#eye"/></svg></span>
        <span class="flex items-center justify-center"><svg width="13" height="17"><use href="#lock"/></svg></span>
      </div>
      <div class="grid h-[20px] shrink-0 grid-cols-[320px_31px_31px] border-b border-[#f0f0f0]">
        <span class="flex items-center border-r border-[#f0f0f0] pb-[1px] pl-[6px]">Ties</span>
        <span class="flex items-center justify-center border-r border-[#f0f0f0]"><svg width="17" height="13"><use href="#eye"/></svg></span>
        <span class="flex items-center justify-center"><svg width="13" height="17"><use href="#lock"/></svg></span>
      </div>
      <div class="grid h-[20px] shrink-0 grid-cols-[320px_31px_31px] border-b border-[#f0f0f0]">
        <span class="flex items-center border-r border-[#f0f0f0] pb-[1px] pl-[6px]">Columns</span>
        <span class="flex items-center justify-center border-r border-[#f0f0f0]"><svg width="17" height="13"><use href="#eye"/></svg></span>
        <span class="flex items-center justify-center"><svg width="13" height="17"><use href="#lock"/></svg></span>
      </div>
      <div class="grid h-[20px] shrink-0 grid-cols-[320px_31px_31px] border-b border-[#f0f0f0]">
        <span class="flex items-center border-r border-[#f0f0f0] pb-[1px] pl-[6px]">Beams</span>
        <span class="flex items-center justify-center border-r border-[#f0f0f0]"><svg width="17" height="13"><use href="#eye"/></svg></span>
        <span class="flex items-center justify-center"><svg width="13" height="17"><use href="#lock"/></svg></span>
      </div>
      <div class="grid h-[20px] shrink-0 grid-cols-[320px_31px_31px] border-b border-[#f0f0f0]">
        <span class="flex items-center border-r border-[#f0f0f0] pb-[1px] pl-[6px]">Panels</span>
        <span class="flex items-center justify-center border-r border-[#f0f0f0]"><svg width="17" height="13"><use href="#eye"/></svg></span>
        <span class="flex items-center justify-center"><svg width="13" height="17"><use href="#lock"/></svg></span>
      </div>
      <div class="grid h-[20px] shrink-0 grid-cols-[320px_31px_31px] border-b border-[#f0f0f0]">
        <span class="flex items-center border-r border-[#f0f0f0] pb-[1px] pl-[6px]">Shells</span>
        <span class="flex items-center justify-center border-r border-[#f0f0f0]"><svg width="17" height="13"><use href="#eye"/></svg></span>
        <span class="flex items-center justify-center"><svg width="13" height="17"><use href="#lock"/></svg></span>
      </div>
    </div>
    <!-- layer colours and analysis elements -->
    <div class="flex h-[72px] flex-col pl-[3px]">
      <div class="mt-[11px] flex h-[14px] items-center"><svg class="mr-[3px]" width="13" height="13"><rect x=".5" y=".5" width="12" height="12" fill="none" stroke="#333"/><use href="#check"/></svg>Represent the structure using layer colours</div>
      <div class="mt-[8px] flex items-center justify-between pr-[3px]"><span>Elements considered in the analysis</span>
        <span class="flex h-[25px] w-[106px] items-center border border-[#7a7a7a] bg-white pb-[1px] pl-[5px]">Stress / Strain<svg class="ml-auto mr-[4px]" width="9" height="6" viewBox="0 0 9 6"><path d="M.5 1L4.500 5l4-4" fill="none" stroke="#555"/></svg></span>
      </div>
      <div class="mt-[6px] flex items-center justify-center gap-[2px]"><i class="h-[2px] w-[2px] bg-[#aaa]"></i><i class="h-[2px] w-[2px] bg-[#aaa]"></i><i class="h-[2px] w-[2px] bg-[#aaa]"></i><i class="h-[2px] w-[2px] bg-[#aaa]"></i></div>
    </div>
    <!-- View options -->
    <div class="flex h-[20px] items-center bg-[#d6d6d6] pb-[1px] pl-[3px]">View options
      <svg class="ml-auto" width="12" height="10"><use href="#chev"/></svg>
      <svg class="ml-[8px] mr-[4px]" width="12" height="12"><use href="#close"/></svg>
    </div>
    <div class="pl-[3px]">
      <div class="flex h-[22px] items-center"><svg class="mr-[6px]" width="16" height="16" viewBox="0 0 16 16"><path d="M1.500 1.500h13v9h-7l-3 4v-4h-3z" fill="#dceaf5" stroke="#26324a" stroke-linejoin="round"/><path d="M3.500 4h9M3.500 7h9" stroke="#5cb4e6"/></svg><svg class="mr-[3px]" width="13" height="13"><rect x=".5" y=".5" width="12" height="12" fill="#fff" stroke="#333"/><use href="#check"/></svg><span class="pb-[1px]">Display element information</span></div>
      <div class="flex h-[22px] items-center"><span class="mr-[6px] w-[16px] text-center font-['Liberation_Serif',serif] text-[20px] font-bold text-[#13233f]">T</span><svg class="mr-[3px]" width="13" height="13"><rect x=".5" y=".5" width="12" height="12" fill="#fff" stroke="#333"/><use href="#check"/></svg><span class="pb-[1px]">Display texts on the elements</span></div>
      <div class="flex h-[22px] items-center"><svg class="mr-[6px]" width="16" height="16" viewBox="0 0 16 16"><path d="M8 1v9L1 15M8 10l7 3" fill="none" stroke="#26324a"/><path d="M1 1l2 2M14 1l2 2M14 14l2 1" stroke="#3a8fc4" stroke-width="1.300"/></svg><svg class="mr-[3px]" width="13" height="13"><rect x=".5" y=".5" width="12" height="12" fill="#fff" stroke="#333"/><use href="#check"/></svg><span class="pb-[1px]">Display the local axes of the elements</span></div>
      <div class="flex h-[22px] items-center"><svg class="mr-[6px]" width="16" height="16" viewBox="0 0 16 16"><rect x="2" y="2" width="12" height="12" fill="#c8d3dc" stroke="#26324a" stroke-dasharray="2 1"/><g fill="#5cb4e6"><rect x="0" y="0" width="3" height="3"/><rect x="13" y="0" width="3" height="3"/><rect x="0" y="13" width="3" height="3"/><rect x="13" y="13" width="3" height="3"/></g></svg><span class="mr-[3px] h-[13px] w-[13px] border border-[#333] bg-white"></span><span class="pb-[1px]">Draw shells with fill</span></div>
      <div class="flex h-[22px] items-center"><svg class="mr-[6px]" width="16" height="16" viewBox="0 0 16 16" fill="#f5cdd1" stroke="#d0404e"><path d="M1.500 1.500h4v13h-4zM10.500 1.500h4v13h-4z"/><path d="M8 1v14" stroke-dasharray="2 1"/></svg><svg class="mr-[3px]" width="13" height="13"><rect x=".5" y=".5" width="12" height="12" fill="#fff" stroke="#333"/><use href="#check"/></svg><span class="pb-[1px]">Draw loads with fill</span></div>
      <div class="mt-[2px] flex h-[23px] items-center pl-[21px]">Dimensions of the nodes<input readonly value="15.0" class="ml-auto h-[23px] w-[63px] border border-[#7a7a7a] bg-white pr-[5px] text-right text-[11.8px]" /><span class="w-[26px] pl-[6px]">cm</span></div>
      <div class="mt-[6px] flex h-[23px] items-center pl-[21px]">Text size<input readonly value="100.0" class="ml-auto h-[23px] w-[63px] border border-[#7a7a7a] bg-white pr-[5px] text-right text-[11.8px]" /><span class="w-[26px] pl-[6px]">%</span></div>
    </div>
  </aside>

  <!-- gutter -->
  <div class="flex w-[8px] flex-col items-center pt-[415px]">
    <div class="flex flex-col gap-[2px]"><i class="h-[2px] w-[2px] bg-[#b5b5b5]"></i><i class="h-[2px] w-[2px] bg-[#b5b5b5]"></i><i class="h-[2px] w-[2px] bg-[#b5b5b5]"></i><i class="h-[2px] w-[2px] bg-[#b5b5b5]"></i></div>
  </div>

  <!-- work area -->
  <div class="flex w-[1530px] flex-col">
    <div class="flex h-[22px] shrink-0 items-center bg-[#d6d6d6] pl-[3px] pt-[2px]">Work area</div>
    <div class="flex h-[20px] shrink-0 items-center bg-[#a2b6cc]">
      <span class="flex h-[20px] w-[16px] shrink-0 items-center justify-center bg-[#b3232f]"><svg width="12" height="12" viewBox="0 0 12 12"><path d="M1 6l2-1v6l-2-1zM7 2l2-1v10l-2-1zM3 7l4-3v2L3 9z" fill="#eee"/></svg></span>
      <span class="ml-[8px] w-[14px] shrink-0">3D</span>
      <span class="ml-[1360px] flex w-[28px] shrink-0 justify-center"><svg width="10" height="14" viewBox="0 0 10 14"><path d="M8.500 1L1.500 7l7 6z" fill="none" stroke="#fff"/></svg></span>
      <span class="flex w-[26px] shrink-0 justify-center"><svg width="10" height="14" viewBox="0 0 10 14"><path d="M1.500 1l7 6-7 6z" fill="none" stroke="#fff"/></svg></span>
      <span class="flex w-[26px] shrink-0 justify-center"><svg width="10" height="2"><rect width="10" height="1" fill="#fff"/></svg></span>
      <span class="flex w-[26px] shrink-0 justify-center"><svg width="11" height="11" viewBox="0 0 11 11" fill="none" stroke="#fff"><rect x=".5" y="2.500" width="7" height="8"/><path d="M3 2.500v-2h7.500v8h-3"/></svg></span>
      <span class="flex w-[26px] shrink-0 justify-center"><svg width="11" height="11" viewBox="0 0 11 11"><path d="M1 1l9 9M10 1l-9 9" stroke="#fff" stroke-width="1.200"/></svg></span>
    </div>
    <div class="flex flex-1">
      <!-- vertical tools -->
      <div class="flex w-[24px] flex-col items-center">
        <span class="flex h-[24px] items-center justify-center"><svg width="16" height="16" viewBox="0 0 16 16" fill="none" stroke="#3f6a94" stroke-width="1.100"><path d="M8 1v8L1 14M8 9l7 5"/></svg></span>
        <span class="flex h-[23px] items-center justify-center"><svg width="16" height="16" viewBox="0 0 16 16" fill="#fff" stroke="#26324a" stroke-width="1.200"><path d="M1.500 5.500l4-4h9v9l-4 4h-9z"/><path d="M1.500 5.500h9v9M10.500 5.500l4-4"/></svg></span>
        <span class="flex h-[23px] items-center justify-center"><svg width="17" height="16" viewBox="0 0 17 16"><ellipse cx="8" cy="9" rx="7" ry="3.500" fill="none" stroke="#333"/><circle cx="8.500" cy="6" r="4.500" fill="#111"/><path d="M11 14l3-1" stroke="#333"/></svg></span>
        <span class="flex h-[26px] items-center justify-center"><svg width="17" height="18" viewBox="0 0 17 18" fill="none" stroke="#333"><circle cx="8.500" cy="3" r="2"/><path d="M8.500 5v12"/><ellipse cx="8.500" cy="11" rx="7" ry="3.500"/><path d="M11 15l2-1" stroke-width="2"/></svg></span>
        <span class="my-[3px] h-px w-[22px] bg-[#c8c8c8]"></span>
        <span class="flex h-[24px] items-center justify-center"><svg width="13" height="15" viewBox="0 0 13 15"><rect x=".5" y="2.500" width="6" height="10" fill="#a9d2ea" stroke="#111"/><rect x="6.500" y="2.500" width="6" height="10" fill="#fff" stroke="#f00"/><path d="M6.500 0v15" stroke="#111" stroke-dasharray="1.500 1"/></svg></span>
        <span class="flex h-[24px] items-center justify-center"><svg width="14" height="14" viewBox="0 0 14 14"><path d="M1 1.500h12v12H1z" fill="#a9d2ea"/><path d="M1 13.500v-12h12z" fill="#2ee85c"/><path d="M1 1.500h12v12H1z" fill="none" stroke="#111"/><path d="M0 14L14 0" stroke="#111" stroke-dasharray="1.500 1"/></svg></span>
        <span class="flex h-[24px] items-center justify-center"><svg width="14" height="14" viewBox="0 0 14 14"><rect x=".5" y=".5" width="13" height="6.500" fill="#b0a6e2" stroke="#1a1a8a"/><rect x=".5" y="7" width="13" height="6.500" fill="#a9d2ea" stroke="#111"/><path d="M0 7h14" stroke="#111" stroke-dasharray="1.500 1"/></svg></span>
        <span class="flex h-[24px] items-center justify-center"><svg width="15" height="16" viewBox="0 0 15 16" stroke="#26324a" stroke-width=".9"><path d="M7.500 1L14 4 7.500 7 1 4z" fill="#f0a7a7"/><path d="M1 4v4l6.500 3V7z" fill="#a9d2ea"/><path d="M14 4v4l-6.500 3V7z" fill="#8fd58f"/><path d="M1 8v4l6.500 3 6.500-3V8l-6.500 3z" fill="#a9d2ea"/></svg></span>
        <span class="flex h-[24px] items-center justify-center"><svg width="16" height="14" viewBox="0 0 16 14"><path d="M.5 7c4-5 11-5 15 0-4 5-11 5-15 0z" fill="#111"/><circle cx="8" cy="7" r="2.500" fill="#777"/><path d="M13 .5L3 13.500" stroke="#f0f0f0" stroke-width="1"/></svg></span>
        <span class="my-[3px] h-px w-[22px] bg-[#c8c8c8]"></span>
        <span class="flex h-[24px] items-center justify-center"><svg width="16" height="18" viewBox="0 0 16 18"><text x="0" y="8" font-size="8" font-weight="700" fill="#222" font-family="Liberation Sans">3D</text><circle cx="9" cy="12" r="4.500" fill="#ccc" stroke="#777" stroke-dasharray="1.500 1"/><circle cx="9" cy="12" r="1.500" fill="#888"/></svg></span>
      </div>
      <!-- 3D canvas -->
      <div class="relative flex-1 bg-white">
        <svg class="absolute inset-0" width="1506" height="802" viewBox="414 200 1506 802" fill="none" shape-rendering="crispEdges">
          <g stroke="#c9975f">
            <path d="M810 324.500L939 260M917 260L1548 576M1548 565L1420 629.500"/>
            <path d="M811 314L830 323.500M1420 618.500L1441 629.500"/>
            <path d="M810 636.500L940 571.500M918 571.500L1548 887.500M1548 876.500L1420 941.500M811 626L1441 941"/>
            <path d="M928.500 254V589M1537.500 558V894M821.500 307V319M821.500 631V643M1431.500 612V624M1431.500 936V948"/>
          </g>
          <path d="M821 319L1431 624M821.500 319V631M1431.500 624V936" stroke="#000"/>
          <g stroke="#0066cc" fill="none">
            <rect x="816.500" y="314.500" width="10" height="10"/>
            <rect x="816.500" y="625.500" width="10" height="10"/>
            <rect x="1426" y="618.500" width="11" height="11"/>
            <rect x="1426" y="930.500" width="11" height="11"/>
          </g>
        </svg>
        <svg class="absolute inset-0" width="1506" height="802" viewBox="414 200 1506 802" fill="none">
          <path d="M439 948V920" stroke="#1414c8" stroke-width="2"/><path d="M439 910l4 12h-8z" fill="#1414c8"/>
          <path d="M439 948L462 936" stroke="#14c814" stroke-width="2"/><path d="M470 932l-8 9-4-7z" fill="#0f8f0f"/>
          <path d="M439 948L462 961" stroke="#a01010" stroke-width="2"/><path d="M470 964l-12-1 4-7z" fill="#8f0f0f"/>
          <g font-family="Liberation Sans" font-size="14" font-weight="700">
            <text x="434" y="906" fill="#1414e6">Z</text>
            <text x="472" y="933" fill="#14d814">Y</text>
            <text x="472" y="971" fill="#f01414">X</text>
          </g>
        </svg>
      </div>
    </div>
  </div>
</main>

<!-- bottom tabs and status -->
<footer class="h-[38px]">
  <div class="flex h-[19px]">
    <span class="flex w-[85px] items-center bg-[#cce8f8] pl-[12px] text-[14.5px] font-bold text-[#44546a]">Structure</span>
    <span class="ml-[18px] flex items-center pb-[3px]">Foundations</span>
  </div>
  <div class="flex h-[19px] items-center pb-[1px] pl-[8px]">
    <svg class="mr-[8px]" width="16" height="16" viewBox="0 0 16 16"><circle cx="8" cy="8" r="8" fill="#1b87d0"/><rect x="6.800" y="3" width="2.400" height="2.400" fill="#fff"/><path d="M6 7h3v5h1.500v1.500h-5V12H7V8.500H6z" fill="#fff"/></svg>
    Select an option from the menu.
  </div>
</footer>
</body>
</html>
